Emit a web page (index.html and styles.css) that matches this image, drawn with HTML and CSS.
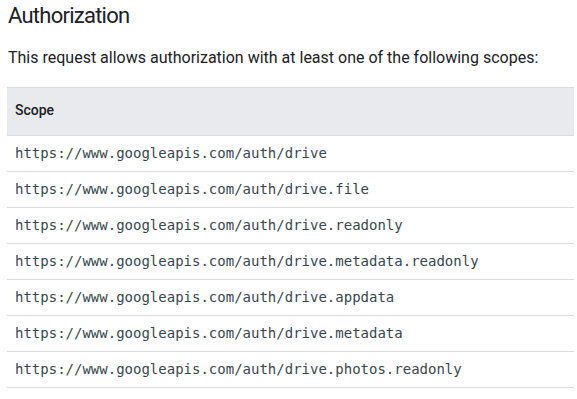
FILE: index.html
```html
<html>
	<head>
		<link rel="stylesheet" href="styles.css">
	</head>
	<body>
		<div class="doc">
			<h2 class="title">Authorization</h2>
			<p class="intro">This request allows authorization with at least one of the following scopes:</p>
			<table class="scopes">
				<thead>
					<tr><th>Scope</th></tr>
				</thead>
				<tbody>
					<tr><td><code>https://www.googleapis.com/auth/drive</code></td></tr>
					<tr><td><code>https://www.googleapis.com/auth/drive.file</code></td></tr>
					<tr><td><code>https://www.googleapis.com/auth/drive.readonly</code></td></tr>
					<tr><td><code>https://www.googleapis.com/auth/drive.metadata.readonly</code></td></tr>
					<tr><td><code>https://www.googleapis.com/auth/drive.appdata</code></td></tr>
					<tr><td><code>https://www.googleapis.com/auth/drive.metadata</code></td></tr>
					<tr><td><code>https://www.googleapis.com/auth/drive.photos.readonly</code></td></tr>
				</tbody>
			</table>
		</div>
	</body>
</html>
```

FILE: styles.css
```css
html body {
	margin: 0;
	background-color: #fff;
	font-family: Roboto, "Noto Sans", sans-serif;
	color: #202124;
}

.doc {
	padding: 0 3px 0 7px;
}

.title {
	margin: 0 0 0 1px;
	font-size: 22px;
	font-weight: 400;
	line-height: 32px;
	letter-spacing: -0.75px;
}

.intro {
	margin: 14px 0 17px 1px;
	font-size: 16px;
	line-height: 24px;
}

.scopes {
	width: 100%;
	border-collapse: collapse;
	border-top: 1px solid #dadce0;
}

.scopes th {
	background-color: #e8eaed;
	text-align: left;
	font-size: 14px;
	font-weight: 500;
	line-height: 20px;
	padding: 12px 8px 15px;
	border-bottom: 1px solid #dadce0;
}

.scopes td {
	padding: 7px 8px 8px;
	line-height: 20px;
	border-bottom: 1px solid #dadce0;
}

.scopes code {
	font-family: "DejaVu Sans Mono", "Liberation Mono", monospace;
	font-size: 14px;
	color: #37474f;
}
```
